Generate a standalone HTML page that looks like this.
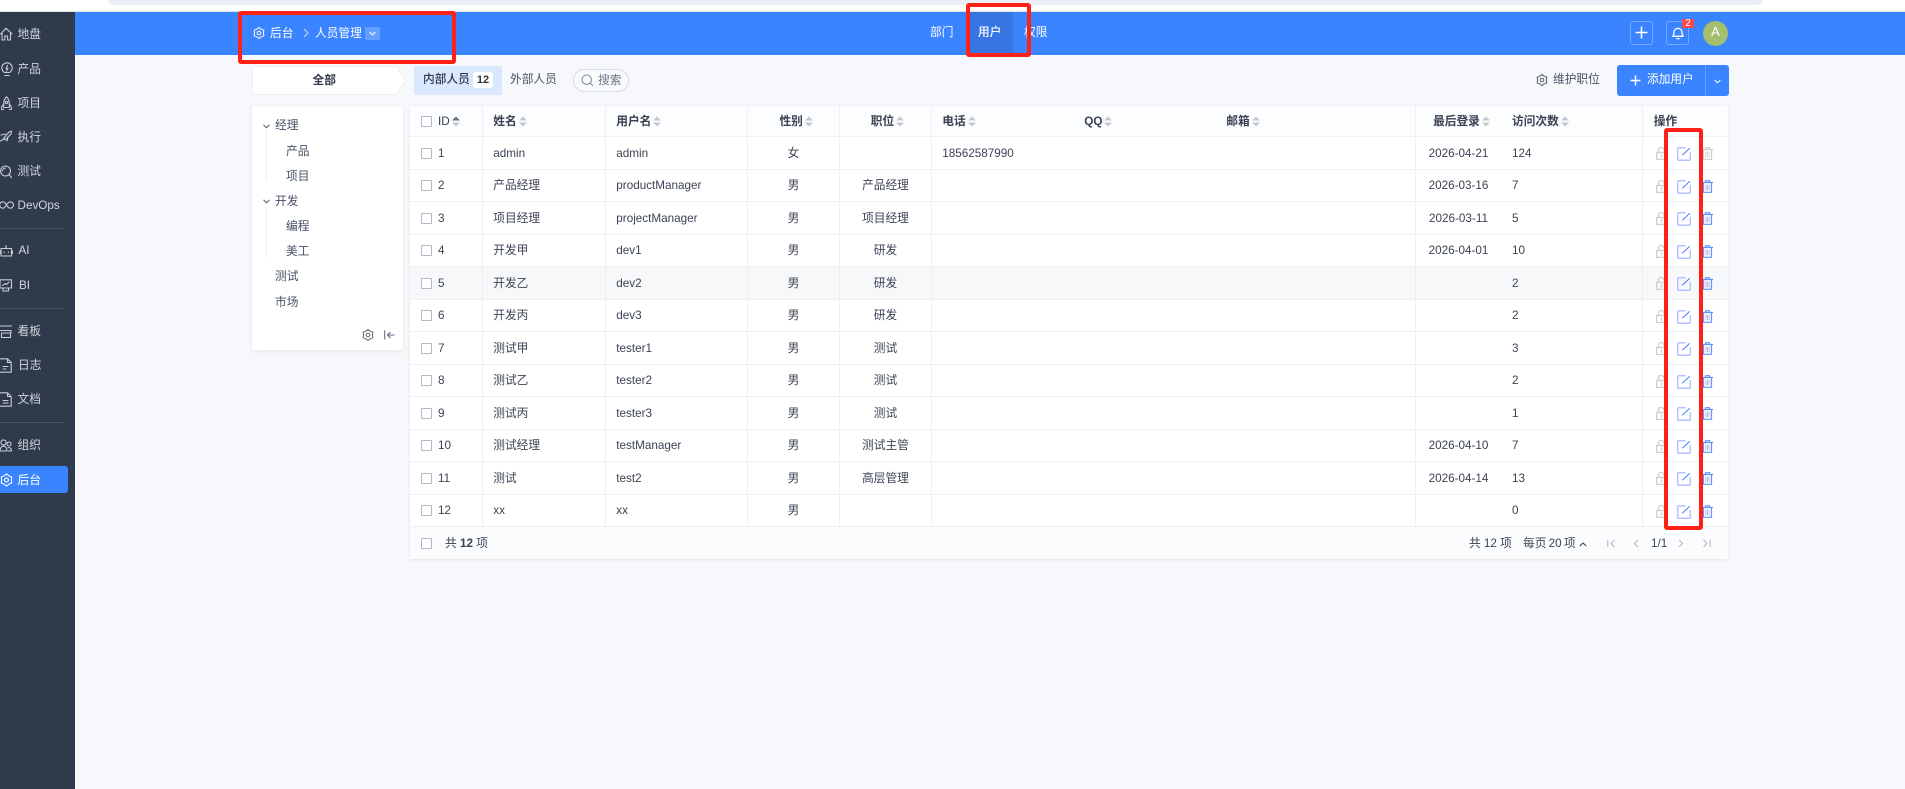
<!DOCTYPE html>
<html lang="zh"><head><meta charset="utf-8"><title>用户</title>
<style>
*{box-sizing:border-box}
html,body{margin:0;padding:0;width:1905px;height:789px;overflow:hidden;background:#f7f8fb;font-family:"Liberation Sans","Noto Sans CJK SC",sans-serif;font-size:11.7px;color:#3c4354}
.a{position:absolute;white-space:nowrap;line-height:16px}
.abs{position:absolute}
svg{display:block;overflow:visible}
.m{color:#d3d7dd;left:17.5px}
.i{position:absolute;color:#c9cdd3;fill:none;stroke:currentColor;stroke-width:1.1;stroke-linecap:round;stroke-linejoin:round}
.sep{position:absolute;left:0;width:64px;height:1px;background:#474f60}
.w{color:#fff}
.tr{position:absolute;color:#475066}
.tbl{position:absolute;left:410px;top:106px;width:1318px;height:453px;background:#fff;box-shadow:0 1px 4px rgba(60,70,90,.1)}
.row{display:flex;height:32.5px;border-bottom:1px solid #eff0f3;line-height:31px}
.hd{height:31px;background:#fcfdfe;font-weight:700;color:#3a4152;line-height:30px}
.c{flex:none;padding:1px 10.3px 0;white-space:nowrap;position:relative;border-right:1px solid #eff0f3;display:flex;align-items:center}
.c0{width:73px;padding-left:11px}
.c1{width:123px}.c2{width:142px}
.c3{width:92px;justify-content:center}.c4{width:92px;justify-content:center}
.c5{width:142px;border:none}.c6{width:142px;border:none}.c7{width:200px}
.c8{width:85px;justify-content:center;border:none;padding:1px 0 0}.c9{width:142px;padding-left:11px}.c10{width:85px;border:none;padding:1px 0 0}
.cb{width:11px;height:11px;border:1px solid #b4b8c4;border-radius:1px;background:#fff;margin-right:6px;flex:none}
.hov{background:#f7f8fa}
.s{width:8px;height:11px;margin-left:2px;flex:none;fill:#c3c6cc}
.ico{position:absolute;fill:none;stroke-linejoin:round;stroke-linecap:round}
.l{left:12.500px;top:10px}.e{left:34px;top:10px}.t{left:58.500px;top:10px}
.red{position:absolute;border:4px solid #ff2016;border-radius:3px}
</style></head><body>
<svg width="0" height="0" style="position:absolute"><defs>
<symbol id="gear" viewBox="0 0 12 12"><path d="M6 .4L8.200 2.200 10.850 3.200 10.400 6 10.850 8.800 8.200 9.800 6 11.600 3.800 9.800 1.150 8.800 1.600 6 1.150 3.200 3.800 2.200z" fill="none" stroke="currentColor" stroke-width="1" stroke-linejoin="round"/><circle cx="6" cy="6" r="1.800" fill="none" stroke="currentColor" stroke-width="1"/></symbol>
<symbol id="s0" viewBox="0 0 8 11"><path d="M4 .5L8 4.500H0z"/><path d="M0 6.500h8L4 10.500z"/></symbol>
<symbol id="s1" viewBox="0 0 8 11"><path d="M4 .5L8 4.500H0z" fill="#6a7080"/><path d="M0 6.500h8L4 10.500z"/></symbol>
<symbol id="lock" viewBox="0 0 11 13"><path d="M.7 5.500h9.600v7H.7zM2.500 5.500V3a2.500 2.500 0 0 1 5-.4M5.500 8v2" fill="none" stroke="#cfd0d2" stroke-width="1.400"/></symbol>
<symbol id="edit" viewBox="0 0 14 14"><path d="M8 .8H1.700a1 1 0 0 0-1 1v10.500a1 1 0 0 0 1 1h10.600a1 1 0 0 0 1-1V5.500" fill="none" stroke="#b3c3ff" stroke-width="1.500"/><path d="M5.500 8L12.500 1.500" fill="none" stroke="#4a7dff" stroke-width="1"/></symbol>
<symbol id="tr" viewBox="0 0 11 13"><path d="M0 2.500h11M3.500 2.500V.7h4v1.800M1.500 2.500v9.800h8V2.500" fill="none" stroke="#5c97ff" stroke-width="1.200"/><path d="M3.900 5v5M5.500 5v5M7.100 5v5" stroke="#b9b6f5" stroke-width="1"/></symbol>
<symbol id="trg" viewBox="0 0 11 13"><path d="M0 2.500h11M3.500 2.500V.7h4v1.800M1.500 2.500v9.800h8V2.500" fill="none" stroke="#cfcfd1" stroke-width="1.200"/><path d="M3.900 5v5M5.500 5v5M7.100 5v5" stroke="#d8d8d9" stroke-width="1"/></symbol>
</defs></svg>

<div class="abs" style="left:0;top:0;width:1905px;height:12px;background:#fff;border-bottom:1px solid #dde1e7"></div>
<div class="abs" style="left:108px;top:0;width:1655px;height:5px;background:#ebeff8;border-radius:0 0 8px 8px"></div>

<!-- sidebar -->
<div class="abs" style="left:0;top:12px;width:75px;height:777px;background:#2f3a4c"></div>
<svg class="i" style="left:0;top:27px" width="13" height="14" viewBox="0 0 13 14"><path d="M.6 7L6 1.300 12 7M2 5.700V13h2.800V9h2.800v4H10.500V5.700"/></svg>
<div class="a m" style="top:26.500px">地盘</div>
<svg class="i" style="left:1px;top:62px" width="12" height="15" viewBox="0 0 12 15"><path d="M3.500 10.500C2 9.500.8 8 .8 6a5.200 5.200 0 0 1 10.400 0c0 2-1.200 3.500-2.700 4.500zM3.800 13.500h4.400M6.500 3.500L5 6.500h2L5.500 9"/></svg>
<div class="a m" style="top:62px">产品</div>
<svg class="i" style="left:1px;top:96px" width="11" height="15" viewBox="0 0 11 15"><path d="M5.500.8C7.500 3 8.300 5 8.300 7.500v4h-5.600v-4C2.700 5 3.500 3 5.500.8zM2.700 8L.6 11v2.500h2.100M8.300 8l2.100 3v2.500H8.300"/><circle cx="5.500" cy="6.500" r="1.200"/></svg>
<div class="a m" style="top:95.500px">项目</div>
<svg class="i" style="left:0;top:130px" width="12" height="13" viewBox="0 0 12 13"><path d="M3.500 8.500L9 2l2.500-.8-.5 2.800L5 10zM.6 11l3-2M5.500 4L1 5M8 7l-1 4"/></svg>
<div class="a m" style="top:129.500px">执行</div>
<svg class="i" style="left:0;top:165px" width="12" height="13" viewBox="0 0 12 13"><circle cx="5.500" cy="6" r="5"/><path d="M9 9.500l2.500 3M2.500 6a3 3 0 0 1 3-3"/></svg>
<div class="a m" style="top:164px">测试</div>
<svg class="i" style="left:0;top:201px" width="13" height="8" viewBox="0 0 13 8"><path d="M6.500 4C5 1.500 3.800.8 2.800.8a3.200 3.200 0 0 0 0 6.400c1 0 2.200-.7 3.700-3.200zm0 0c1.500-2.500 2.700-3.200 3.700-3.200a3.200 3.200 0 0 1 0 6.400c-1 0-2.200-.7-3.700-3.200z"/></svg>
<div class="a m" style="top:198px">DevOps</div>
<div class="sep" style="top:228px"></div>
<svg class="i" style="left:0;top:244px" width="13" height="13" viewBox="0 0 13 13"><path d="M1 4.500h10.500V12H1zM6 4.500V1.500M4 8v.5M8.500 8v.5M12.500 7v2.500M0 7v2.500"/></svg>
<div class="a m" style="top:243px;left:18.500px">AI</div>
<svg class="i" style="left:0;top:279px" width="12" height="13" viewBox="0 0 12 13"><path d="M0 .8h11.500V9H0zM3 9v3h5.500V9M2.500 6.500L5 4.500l1.500 1L9 3"/></svg>
<div class="a m" style="top:277.500px;left:19px">BI</div>
<div class="sep" style="top:308px"></div>
<svg class="i" style="left:0;top:325px" width="12" height="13" viewBox="0 0 12 13"><path d="M0 1h11.500M0 5.500h11V8H1.500M1.500 8.500v4h9V8.500"/></svg>
<div class="a m" style="top:324px">看板</div>
<svg class="i" style="left:0;top:358px" width="12" height="15" viewBox="0 0 12 15"><path d="M0 .8h7.500l3.700 3.700v9.700H0M7.500 .8v3.700h3.700M3 8.500h5M3 11h3"/></svg>
<div class="a m" style="top:358px;left:18px">日志</div>
<svg class="i" style="left:0;top:392px" width="12" height="15" viewBox="0 0 12 15"><path d="M0 .8h7.500l3.700 3.700v9.700H0M7.500 .8v3.700h3.700M3 8.500h5M3 11h5"/></svg>
<div class="a m" style="top:392px">文档</div>
<div class="sep" style="top:422px"></div>
<svg class="i" style="left:0;top:439px" width="12" height="13" viewBox="0 0 12 13"><circle cx="3.500" cy="3.500" r="2.600"/><circle cx="9" cy="5" r="2"/><path d="M0 12c0-3 1.500-4.800 3.500-4.800S7 9 7 12zM8 8.500c2 0 3.500 1 3.500 3.500H8.500"/></svg>
<div class="a m" style="top:438px">组织</div>
<div class="abs" style="left:0;top:466px;width:68px;height:27px;background:#3a85ff;border-radius:0 3px 3px 0"></div>
<svg class="abs" style="left:0;top:473px;color:#fff" width="13" height="14"><use href="#gear"/></svg>
<div class="a w" style="top:473px;left:17.500px">后台</div>

<!-- header -->
<div class="abs" style="left:75px;top:12px;width:1830px;height:43px;background:#3a85ff"></div>
<svg class="abs" style="left:253px;top:27px;color:#fff" width="12" height="12"><use href="#gear"/></svg>
<div class="a w" style="left:270px;top:26px">后台</div>
<svg class="abs" style="left:303px;top:28px" width="6" height="10" viewBox="0 0 6 10"><path d="M1 1l4 4-4 4" fill="none" stroke="#a9c9ff" stroke-width="1.300"/></svg>
<div class="a w" style="left:315px;top:26px">人员管理</div>
<div class="abs" style="left:365px;top:26.500px;width:15px;height:13.500px;background:#669fff;border-radius:2px"></div>
<svg class="abs" style="left:369px;top:31px" width="7" height="5" viewBox="0 0 7 5"><path d="M.7 1l2.800 2.800L6.300 1" fill="none" stroke="#fff" stroke-width="1"/></svg>

<div class="abs" style="left:970px;top:12px;width:43px;height:43px;background:#3776e2"></div>
<div class="a w" style="left:930px;top:25px">部门</div>
<div class="a w" style="left:978px;top:25px;font-weight:500">用户</div>
<div class="a w" style="left:1024px;top:25px">权限</div>

<div class="abs" style="left:1630px;top:21px;width:23px;height:24px;border:1px solid #75a8ff;border-radius:3px"></div>
<svg class="abs" style="left:1635px;top:26px" width="13" height="13" viewBox="0 0 13 13"><path d="M6.500 .5v12M.5 6.500h12" stroke="#fff" stroke-width="1.500" fill="none"/></svg>
<div class="abs" style="left:1666px;top:21px;width:23px;height:24px;border:1px solid #75a8ff;border-radius:3px"></div>
<svg class="abs" style="left:1672px;top:26px" width="12" height="14" viewBox="0 0 12 14"><path d="M.8 10.300c1-1 1.200-2 1.200-4a4 4 0 0 1 8 0c0 2 .2 3 1.200 4zM4.500 12.600h3" fill="none" stroke="#fff" stroke-width="1.300" stroke-linejoin="round"/></svg>
<div class="abs" style="left:1682px;top:19px;width:12px;height:8.500px;background:#f9474f;border-radius:1px"></div>
<div class="abs" style="left:1682px;top:18px;width:12px;text-align:center;color:#fff;font-size:10px;line-height:11px">2</div>
<div class="abs" style="left:1703px;top:21px;width:25px;height:25px;background:#a5bf6e;border-radius:50%;color:#fff;text-align:center;line-height:21px;font-size:13px">A</div>

<!-- toolbar -->
<svg class="abs" style="left:252px;top:66px" width="155" height="29" viewBox="0 0 155 29"><path d="M.5 .5H144.500L153.500 14.500 144.500 28.500H.5z" fill="#fff" stroke="#eceef3"/></svg>
<div class="a" style="left:312.500px;top:73px;font-weight:700;color:#333a4a">全部</div>
<div class="abs" style="left:414px;top:66px;width:88px;height:29px;background:#d9e8ff;border-radius:2px"></div>
<div class="a" style="left:423px;top:72px;color:#323a4c;font-weight:500">内部人员</div>
<div class="abs" style="left:473px;top:72px;width:20px;height:16px;background:#fff;border-radius:3px;text-align:center;line-height:16px;font-size:11px;font-weight:700;color:#333">12</div>
<div class="a" style="left:510px;top:72px;color:#4a5266">外部人员</div>
<div class="abs" style="left:573px;top:69px;width:56px;height:23px;border:1px solid #d8dce6;border-radius:12px;background:#fafbfd"></div>
<svg class="abs" style="left:581px;top:74px" width="13" height="13" viewBox="0 0 13 13"><circle cx="5.700" cy="5.700" r="4.700" fill="none" stroke="#7f8ca3" stroke-width="1.100"/><path d="M9 9l3 3" stroke="#7f8ca3" stroke-width="1.100"/></svg>
<div class="a" style="left:598px;top:72.500px;color:#6b7488">搜索</div>
<svg class="abs" style="left:1536px;top:74px;color:#4f576a" width="12" height="12"><use href="#gear"/></svg>
<div class="a" style="left:1553px;top:72px;color:#4a5266">维护职位</div>
<div class="abs" style="left:1617px;top:65px;width:112px;height:31px;background:#3a85ff;border-radius:3px"></div>
<div class="abs" style="left:1705px;top:65px;width:1px;height:31px;background:#689ffc"></div>
<svg class="abs" style="left:1630px;top:75px" width="11" height="11" viewBox="0 0 11 11"><path d="M5.500 .5v10M.5 5.500h10" stroke="#fff" stroke-width="1.500" fill="none"/></svg>
<div class="a w" style="left:1647px;top:72px">添加用户</div>
<svg class="abs" style="left:1714px;top:79px" width="7" height="5" viewBox="0 0 7 5"><path d="M.7 1l2.800 2.800L6.300 1" fill="none" stroke="#fff" stroke-width="1"/></svg>

<!-- tree -->
<div class="abs" style="left:252px;top:106px;width:151px;height:244px;background:#fff;border-radius:2px;box-shadow:0 1px 4px rgba(60,70,90,.1)"></div>
<svg class="abs" style="left:263px;top:124px" width="7" height="5" viewBox="0 0 7 5"><path d="M.5 .8l3 3 3-3" fill="none" stroke="#4a5266" stroke-width="1"/></svg>
<svg class="abs" style="left:263px;top:199px" width="7" height="5" viewBox="0 0 7 5"><path d="M.5 .8l3 3 3-3" fill="none" stroke="#4a5266" stroke-width="1"/></svg>
<div class="abs" style="left:266px;top:131px;width:1px;height:50px;background:#eceef2"></div>
<div class="abs" style="left:266px;top:207px;width:1px;height:50px;background:#eceef2"></div>
<div class="a tr" style="left:275px;top:118px">经理</div>
<div class="a tr" style="left:286px;top:144px">产品</div>
<div class="a tr" style="left:286px;top:169px">项目</div>
<div class="a tr" style="left:275px;top:194px">开发</div>
<div class="a tr" style="left:286px;top:219px">编程</div>
<div class="a tr" style="left:286px;top:244px">美工</div>
<div class="a tr" style="left:275px;top:269px">测试</div>
<div class="a tr" style="left:275px;top:295px">市场</div>
<svg class="abs" style="left:361.500px;top:329px;color:#5c6476" width="12" height="12"><use href="#gear"/></svg>
<svg class="abs" style="left:384px;top:330px" width="11" height="10" viewBox="0 0 11 10"><path d="M.7 .5v9M10.500 5H3.500M6.500 2L3.500 5l3 3" fill="none" stroke="#5c6476" stroke-width="1"/></svg>

<!-- table -->
<div class="tbl">
<div class="row hd">
<div class="c c0"><span class="cb"></span><span style="font-weight:400">ID</span><svg class="s"><use href="#s1"/></svg></div>
<div class="c c1">姓名<svg class="s"><use href="#s0"/></svg></div>
<div class="c c2">用户名<svg class="s"><use href="#s0"/></svg></div>
<div class="c c3" style="padding-left:15.600px">性别<svg class="s"><use href="#s0"/></svg></div>
<div class="c c4" style="padding-left:14.300px">职位<svg class="s"><use href="#s0"/></svg></div>
<div class="c c5">电话<svg class="s"><use href="#s0"/></svg></div>
<div class="c c6">QQ<svg class="s"><use href="#s0"/></svg></div>
<div class="c c7">邮箱<svg class="s"><use href="#s0"/></svg></div>
<div class="c c8" style="padding-left:6px">最后登录<svg class="s"><use href="#s0"/></svg></div>
<div class="c c9">访问次数<svg class="s"><use href="#s0"/></svg></div>
<div class="c c10" style="padding-left:10.800px">操作</div>
</div>
<div class="row"><div class="c c0"><span class="cb"></span>1</div><div class="c c1">admin</div><div class="c c2">admin</div><div class="c c3">女</div><div class="c c4"></div><div class="c c5">18562587990</div><div class="c c6"></div><div class="c c7"></div><div class="c c8">2026-04-21</div><div class="c c9">124</div><div class="c c10"><svg class="ico l" width="11" height="13"><use href="#lock"/></svg><svg class="ico e" width="14" height="14"><use href="#edit"/></svg><svg class="ico t" width="11" height="13"><use href="#trg"/></svg></div></div>
<div class="row"><div class="c c0"><span class="cb"></span>2</div><div class="c c1">产品经理</div><div class="c c2">productManager</div><div class="c c3">男</div><div class="c c4">产品经理</div><div class="c c5"></div><div class="c c6"></div><div class="c c7"></div><div class="c c8">2026-03-16</div><div class="c c9">7</div><div class="c c10"><svg class="ico l" width="11" height="13"><use href="#lock"/></svg><svg class="ico e" width="14" height="14"><use href="#edit"/></svg><svg class="ico t" width="11" height="13"><use href="#tr"/></svg></div></div>
<div class="row"><div class="c c0"><span class="cb"></span>3</div><div class="c c1">项目经理</div><div class="c c2">projectManager</div><div class="c c3">男</div><div class="c c4">项目经理</div><div class="c c5"></div><div class="c c6"></div><div class="c c7"></div><div class="c c8">2026-03-11</div><div class="c c9">5</div><div class="c c10"><svg class="ico l" width="11" height="13"><use href="#lock"/></svg><svg class="ico e" width="14" height="14"><use href="#edit"/></svg><svg class="ico t" width="11" height="13"><use href="#tr"/></svg></div></div>
<div class="row"><div class="c c0"><span class="cb"></span>4</div><div class="c c1">开发甲</div><div class="c c2">dev1</div><div class="c c3">男</div><div class="c c4">研发</div><div class="c c5"></div><div class="c c6"></div><div class="c c7"></div><div class="c c8">2026-04-01</div><div class="c c9">10</div><div class="c c10"><svg class="ico l" width="11" height="13"><use href="#lock"/></svg><svg class="ico e" width="14" height="14"><use href="#edit"/></svg><svg class="ico t" width="11" height="13"><use href="#tr"/></svg></div></div>
<div class="row hov"><div class="c c0"><span class="cb"></span>5</div><div class="c c1">开发乙</div><div class="c c2">dev2</div><div class="c c3">男</div><div class="c c4">研发</div><div class="c c5"></div><div class="c c6"></div><div class="c c7"></div><div class="c c8"></div><div class="c c9">2</div><div class="c c10"><svg class="ico l" width="11" height="13"><use href="#lock"/></svg><svg class="ico e" width="14" height="14"><use href="#edit"/></svg><svg class="ico t" width="11" height="13"><use href="#tr"/></svg></div></div>
<div class="row"><div class="c c0"><span class="cb"></span>6</div><div class="c c1">开发丙</div><div class="c c2">dev3</div><div class="c c3">男</div><div class="c c4">研发</div><div class="c c5"></div><div class="c c6"></div><div class="c c7"></div><div class="c c8"></div><div class="c c9">2</div><div class="c c10"><svg class="ico l" width="11" height="13"><use href="#lock"/></svg><svg class="ico e" width="14" height="14"><use href="#edit"/></svg><svg class="ico t" width="11" height="13"><use href="#tr"/></svg></div></div>
<div class="row"><div class="c c0"><span class="cb"></span>7</div><div class="c c1">测试甲</div><div class="c c2">tester1</div><div class="c c3">男</div><div class="c c4">测试</div><div class="c c5"></div><div class="c c6"></div><div class="c c7"></div><div class="c c8"></div><div class="c c9">3</div><div class="c c10"><svg class="ico l" width="11" height="13"><use href="#lock"/></svg><svg class="ico e" width="14" height="14"><use href="#edit"/></svg><svg class="ico t" width="11" height="13"><use href="#tr"/></svg></div></div>
<div class="row"><div class="c c0"><span class="cb"></span>8</div><div class="c c1">测试乙</div><div class="c c2">tester2</div><div class="c c3">男</div><div class="c c4">测试</div><div class="c c5"></div><div class="c c6"></div><div class="c c7"></div><div class="c c8"></div><div class="c c9">2</div><div class="c c10"><svg class="ico l" width="11" height="13"><use href="#lock"/></svg><svg class="ico e" width="14" height="14"><use href="#edit"/></svg><svg class="ico t" width="11" height="13"><use href="#tr"/></svg></div></div>
<div class="row"><div class="c c0"><span class="cb"></span>9</div><div class="c c1">测试丙</div><div class="c c2">tester3</div><div class="c c3">男</div><div class="c c4">测试</div><div class="c c5"></div><div class="c c6"></div><div class="c c7"></div><div class="c c8"></div><div class="c c9">1</div><div class="c c10"><svg class="ico l" width="11" height="13"><use href="#lock"/></svg><svg class="ico e" width="14" height="14"><use href="#edit"/></svg><svg class="ico t" width="11" height="13"><use href="#tr"/></svg></div></div>
<div class="row"><div class="c c0"><span class="cb"></span>10</div><div class="c c1">测试经理</div><div class="c c2">testManager</div><div class="c c3">男</div><div class="c c4">测试主管</div><div class="c c5"></div><div class="c c6"></div><div class="c c7"></div><div class="c c8">2026-04-10</div><div class="c c9">7</div><div class="c c10"><svg class="ico l" width="11" height="13"><use href="#lock"/></svg><svg class="ico e" width="14" height="14"><use href="#edit"/></svg><svg class="ico t" width="11" height="13"><use href="#tr"/></svg></div></div>
<div class="row"><div class="c c0"><span class="cb"></span>11</div><div class="c c1">测试</div><div class="c c2">test2</div><div class="c c3">男</div><div class="c c4">高层管理</div><div class="c c5"></div><div class="c c6"></div><div class="c c7"></div><div class="c c8">2026-04-14</div><div class="c c9">13</div><div class="c c10"><svg class="ico l" width="11" height="13"><use href="#lock"/></svg><svg class="ico e" width="14" height="14"><use href="#edit"/></svg><svg class="ico t" width="11" height="13"><use href="#tr"/></svg></div></div>
<div class="row"><div class="c c0"><span class="cb"></span>12</div><div class="c c1">xx</div><div class="c c2">xx</div><div class="c c3">男</div><div class="c c4"></div><div class="c c5"></div><div class="c c6"></div><div class="c c7"></div><div class="c c8"></div><div class="c c9">0</div><div class="c c10"><svg class="ico l" width="11" height="13"><use href="#lock"/></svg><svg class="ico e" width="14" height="14"><use href="#edit"/></svg><svg class="ico t" width="11" height="13"><use href="#tr"/></svg></div></div>
<div class="abs" style="left:0;top:421px;width:1318px;height:32px;background:#fbfcfe"></div>
<span class="cb abs" style="left:11px;top:432px"></span>
<div class="a" style="left:35px;top:429.500px">共 <b>12</b> 项</div>
<div class="a" style="left:1059px;top:429.500px">共 12 项</div>
<div class="a" style="left:1113px;top:429.500px;word-spacing:-1px">每页 20 项</div>
<svg class="abs" style="left:1169px;top:436px" width="8" height="5" viewBox="0 0 8 5"><path d="M.7 4L4 1l3.300 3" fill="none" stroke="#3c4354" stroke-width="1.100"/></svg>
<svg class="abs" style="left:1197px;top:433px" width="9" height="9" viewBox="0 0 9 9"><path d="M.8 1v7M7.500 1L4 4.500 7.500 8" fill="none" stroke="#b0b4bc" stroke-width="1"/></svg>
<svg class="abs" style="left:1223px;top:433px" width="6" height="9" viewBox="0 0 6 9"><path d="M5 1L1.500 4.500 5 8" fill="none" stroke="#b0b4bc" stroke-width="1"/></svg>
<div class="a" style="left:1241px;top:429.500px">1/1</div>
<svg class="abs" style="left:1268px;top:433px" width="6" height="9" viewBox="0 0 6 9"><path d="M1 1l3.500 3.500L1 8" fill="none" stroke="#b0b4bc" stroke-width="1"/></svg>
<svg class="abs" style="left:1292px;top:433px" width="9" height="9" viewBox="0 0 9 9"><path d="M8.200 1v7M1.500 1L5 4.500 1.500 8" fill="none" stroke="#b0b4bc" stroke-width="1"/></svg>
</div>

<!-- red annotations -->
<div class="red" style="left:238px;top:11px;width:218px;height:53px"></div>
<div class="red" style="left:966px;top:3px;width:65px;height:54px"></div>
<div class="red" style="left:1664px;top:128px;width:38.500px;height:402px"></div>
</body></html>
